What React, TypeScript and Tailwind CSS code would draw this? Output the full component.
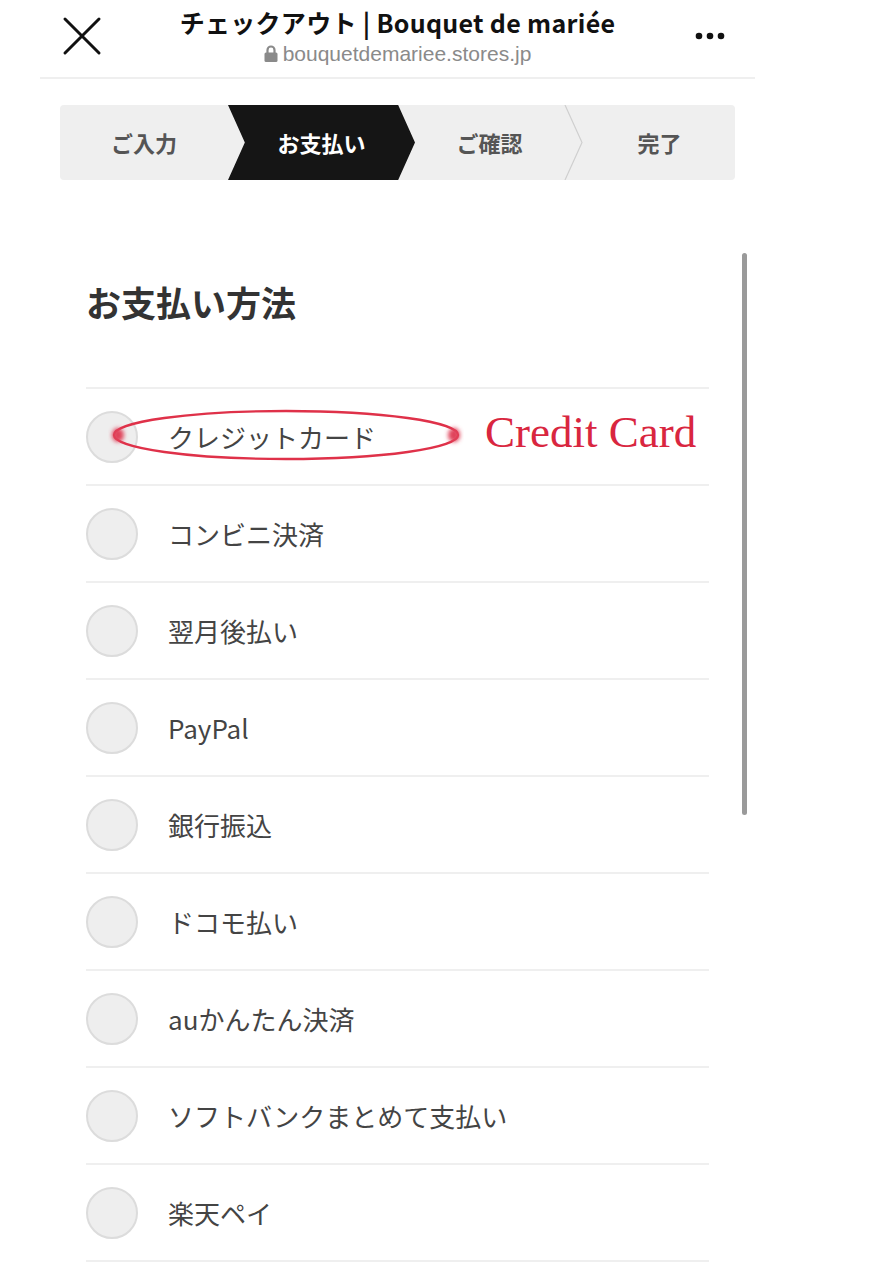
const methods = [
  "クレジットカード",
  "コンビニ決済",
  "翌月後払い",
  "PayPal",
  "銀行振込",
  "ドコモ払い",
  "auかんたん決済",
  "ソフトバンクまとめて支払い",
  "楽天ペイ",
];

const jp = "font-['Noto_Sans_CJK_JP','Noto_Sans',sans-serif]";

function Header() {
  return (
    <div className="flex h-[79px] items-center border-b-2 border-[#efefef]">
      <div className="flex w-[100px] pl-[22px]">
        <svg width="40" height="40" viewBox="0 0 40 40" className="-mt-[6px]">
          <path d="M3 3 L37 37 M37 3 L3 37" stroke="#111" strokeWidth="3" strokeLinecap="round" />
        </svg>
      </div>
      <div className="flex flex-1 flex-col items-center -mt-[4px]">
        <div className="text-[25px] font-bold leading-[30px] tracking-[0.3px] text-[#111]">
          チェックアウト | Bouquet de mariée
        </div>
        <div className="mt-[4px] flex items-center gap-[5px] text-[21px] leading-[26px] text-[#8a8a8a] font-['Liberation_Sans',sans-serif]">
          <svg width="14" height="17" viewBox="0 0 14 17">
            <path d="M3.5 8 V5 a3.5 3.5 0 0 1 7 0 V8" stroke="#8a8a8a" strokeWidth="2.2" fill="none" />
            <rect x="0.5" y="7.5" width="13" height="9.5" rx="1.5" fill="#8a8a8a" />
          </svg>
          <span>bouquetdemariee.stores.jp</span>
        </div>
      </div>
      <div className="flex w-[100px] justify-end pr-[30px] -mt-[6px]">
        <svg width="30" height="8" viewBox="0 0 30 8">
          <circle cx="4" cy="4" r="3.3" fill="#111" />
          <circle cx="15" cy="4" r="3.3" fill="#111" />
          <circle cx="26" cy="4" r="3.3" fill="#111" />
        </svg>
      </div>
    </div>
  );
}

function Stepper() {
  return (
    <div className="mx-[20px] mt-[26px] flex h-[75px] overflow-hidden rounded-[4px] bg-[#efefef] text-[22px] font-bold text-[#555]">
      <div className="flex w-[168px] items-center justify-center">ご入力</div>
      <div className="flex w-[187px] items-center justify-center bg-[#151515] text-white [clip-path:polygon(0_0,91%_0,100%_50%,91%_100%,0_100%,9%_50%)]">
        お支払い
      </div>
      <div className="flex flex-1 items-center justify-center">ご確認</div>
      <svg width="20" height="75" viewBox="0 0 20 75">
        <path d="M1 0 L18 37.5 L1 75" stroke="#cfcfcf" strokeWidth="1.2" fill="none" />
      </svg>
      <div className="flex w-[151px] items-center justify-center">完了</div>
    </div>
  );
}

function Annotation() {
  return (
    <>
      <svg
        className="absolute left-[22px] top-[18px]"
        width="356"
        height="56"
        viewBox="0 0 356 56"
      >
        <defs>
          <filter id="blur" x="-50%" y="-50%" width="200%" height="200%">
            <feGaussianBlur stdDeviation="2" />
          </filter>
        </defs>
        <ellipse cx="178" cy="28" rx="172" ry="24" fill="none" stroke="#df3149" strokeWidth="2.4" />
        <ellipse cx="10" cy="28" rx="6" ry="7" fill="#e0435a" filter="url(#blur)" />
        <ellipse cx="346" cy="28" rx="6" ry="7" fill="#e0435a" filter="url(#blur)" />
      </svg>
      <div className="absolute left-[399px] top-[15px] font-['Liberation_Serif',serif] text-[45px] leading-[56px] text-[#d9263f]">
        Credit Card
      </div>
    </>
  );
}

function PaymentList() {
  return (
    <div className="mx-[46px] border-t-2 border-[#efefef]">
      {methods.map((m, i) => (
        <div
          key={m}
          className="relative flex h-[97px] items-center border-b-2 border-[#efefef]"
        >
          <div className="h-[52px] w-[52px] shrink-0 rounded-full border-2 border-[#dcdcdc] bg-[#eeeeee]" />
          <div className="ml-[30px] text-[26px] text-[#444]">{m}</div>
          {i === 0 && <Annotation />}
        </div>
      ))}
    </div>
  );
}

export default function App() {
  return (
    <div className={`relative min-h-[1267px] w-[874px] overflow-hidden bg-white ${jp}`}>
      <div className="ml-[40px] w-[715px]">
        <Header />
        <Stepper />
        <h1 className="ml-[46px] mt-[102px] mb-[65px] text-[35px] font-bold leading-[40px] text-[#333]">
          お支払い方法
        </h1>
        <PaymentList />
      </div>
      {/* scrollbar */}
      <div className="absolute left-[742px] top-[253px] h-[562px] w-[5px] rounded-full bg-[#9a9a9a]" />
    </div>
  );
}
